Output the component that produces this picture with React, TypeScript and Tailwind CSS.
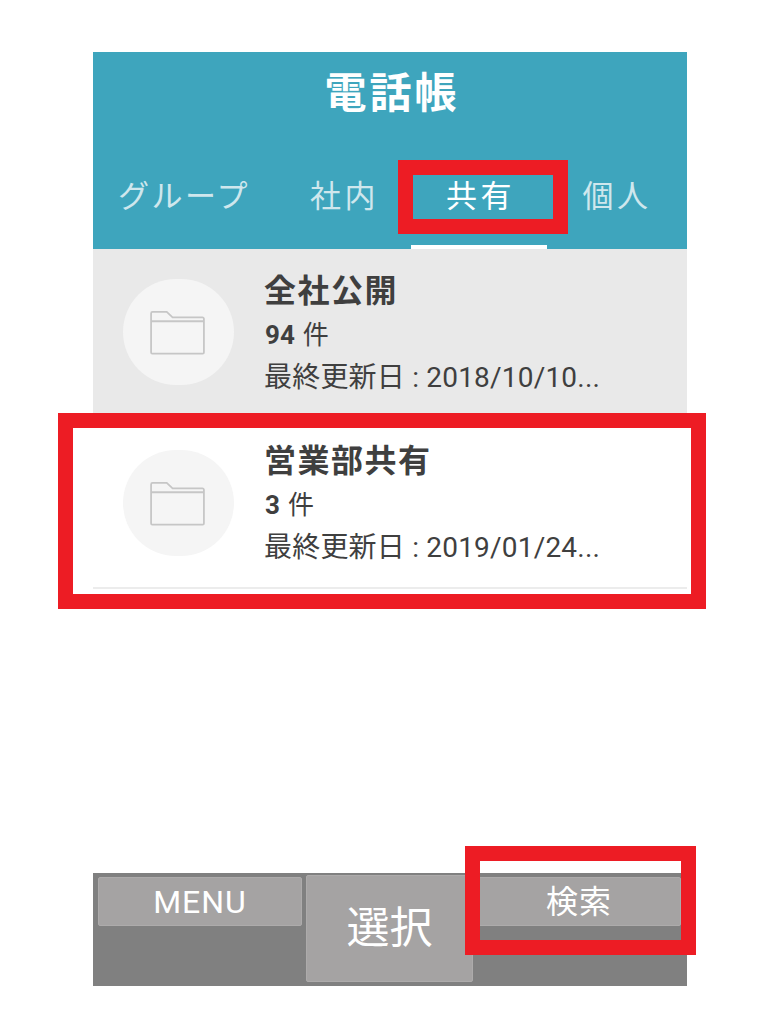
const jp = "font-['Roboto','Noto_Sans_CJK_JP',sans-serif]"

const groups = [
  { name: "全社公開", count: "94", updated: "2018/10/10...", active: true },
  { name: "営業部共有", count: "3", updated: "2019/01/24...", active: false },
]

function FolderIcon() {
  return (
    <svg width="57" height="45" viewBox="0 0 58 46" fill="none" stroke="#c6c6c6" strokeWidth="1.8" className="mr-[3px]">
      <path d="M2 43.5V3.5a1.5 1.5 0 0 1 1.5-1.5H18l6 5.5h30.5A1.5 1.5 0 0 1 56 9v34.5a1.2 1.2 0 0 1-1.2 1.2H3.2A1.2 1.2 0 0 1 2 43.5Z" />
      <path d="M2 11.5h54" />
    </svg>
  )
}

function GroupRow({ name, count, updated, active }: { name: string; count: string; updated: string; active: boolean }) {
  return (
    <div className={`flex h-[170px] ${active ? "bg-[#e9e9e9]" : "border-b-2 border-[#ececec] bg-white"}`}>
      <div className={`ml-[30px] flex h-[106px] w-[111px] items-center justify-center rounded-full bg-[#f5f5f5] ${active ? "mt-[30px]" : "mt-[31px]"}`}>
        <FolderIcon />
      </div>
      <div className="ml-[30px] pt-[20px] text-[#3f3f3f]">
        <div className="text-[32px] leading-[44px] font-bold tracking-[1.5px]">{name}</div>
        <div className="mt-[4px] ml-[1px] flex items-center gap-[8px] text-[26px] leading-[36px]">
          <span className="font-bold">{count}</span>
          <span>件</span>
        </div>
        <div className="mt-[7px] text-[28px] leading-[36px] tracking-[0.2px] whitespace-nowrap">
          <span>最終更新日</span> : {updated}
        </div>
      </div>
    </div>
  )
}

function SideButton({ label }: { label: string }) {
  return (
    <button className="mt-[4px] flex h-[49px] w-[204px] items-center justify-center rounded-[2px] border border-[#adabab] bg-[#a5a3a3] text-[32px] tracking-[1px] text-white">
      {label}
    </button>
  )
}

export default function App() {
  return (
    <div className={`relative h-[1029px] w-[773px] overflow-hidden bg-white pt-[52px] pl-[93px] ${jp}`}>
      <div className="flex h-[934px] w-[594px] flex-col">
        {/* header */}
        <div className="flex h-[197px] flex-col bg-[#3ea5bd]">
          <div className="pt-[11px] pl-[4px] text-center text-[42px] leading-[62px] font-bold tracking-[3px] text-white">電話帳</div>
          <div className="mt-[29px] flex h-[95px] text-[31px] text-[#cfe7ed]">
            <div className="w-[182px] pt-[20px] text-center tracking-[2.5px]">グループ</div>
            <div className="w-[136px] pt-[20px] pl-[3px] text-center tracking-[3.5px]">社内</div>
            <div className="w-[136px] border-b-4 border-white pt-[20px] pl-[3px] text-center tracking-[3.5px] text-white">共有</div>
            <div className="w-[136px] pt-[20px] pl-[4px] text-center tracking-[3.5px]">個人</div>
          </div>
        </div>

        {/* list */}
        <div className="flex-1">
          {groups.map((g) => (
            <GroupRow key={g.name} {...g} />
          ))}
        </div>

        {/* bottom bar */}
        <div className="flex h-[113px] items-start gap-[4px] bg-[#808080] px-[5px]">
          <SideButton label="MENU" />
          <button className="mt-[2px] flex h-[107px] w-[167px] items-center justify-center rounded-[2px] border border-[#adabab] bg-[#a5a3a3] text-[43px] text-white">
            選択
          </button>
          <SideButton label="検索" />
        </div>
      </div>

      {/* red annotation frames */}
      <div className="absolute top-[160px] left-[398px] h-[74px] w-[170px] border-[15px] border-[#ed1c24]" />
      <div className="absolute top-[413px] left-[58px] h-[196px] w-[648px] border-[15px] border-[#ed1c24]" />
      <div className="absolute top-[846px] left-[465px] h-[109px] w-[231px] border-[15px] border-[#ed1c24]" />
    </div>
  )
}
